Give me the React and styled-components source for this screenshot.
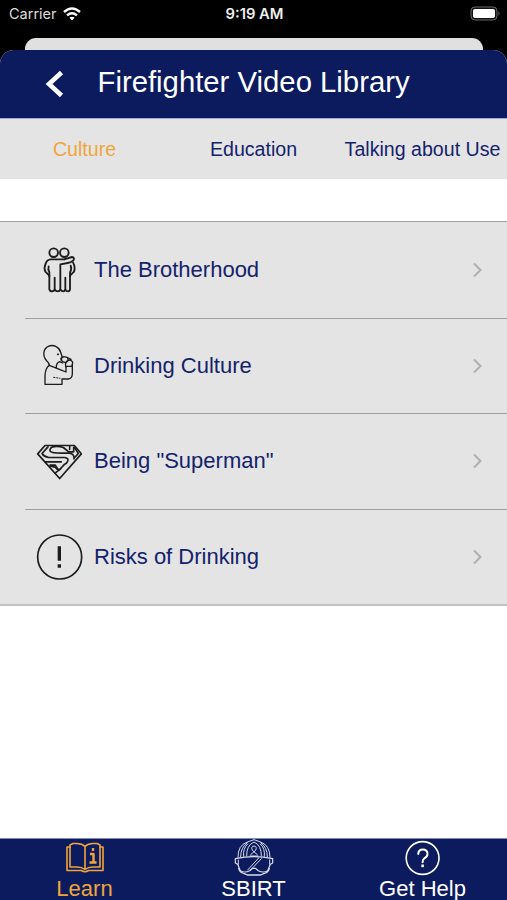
import styled, { createGlobalStyle } from 'styled-components'

const colors = {
  navy: '#0b1b5e',
  ink: '#14226c',
  orange: '#f0a53c',
  grey: '#e4e4e4',
  line: '#a0a0a0'
}

const GlobalStyle = createGlobalStyle`
  * {
    box-sizing: border-box;
  }
  body {
    margin: 0;
    background: #000;
    font-family: "Liberation Sans", Arial, sans-serif;
  }
`
const Screen = styled.div`
  width: 507px;
  height: 900px;
  display: flex;
  flex-direction: column;
  overflow: hidden;
`
const StatusBar = styled.header`
  height: 38px;
  flex: none;
  display: grid;
  grid-template-columns: 1fr auto 1fr;
  padding: 0 7px 11px 9px;
  align-items: center;
  color: #dcdcdc;
  font-family: Inter, sans-serif;
  font-size: 14.5px;
`
const Carrier = styled.div`
  display: flex;
  align-items: center;
  gap: 6px;
`
const Time = styled.div`
  font-weight: 600;
  font-size: 14.8px;
  color: #eee;
`
const Battery = styled.svg`
  justify-self: end;
`
const BackCard = styled.div`
  flex: none;
  height: 12px;
  margin: 0 24px 0 25px;
  background: #e0e0e0;
  border-radius: 11px 11px 0 0;
`
const Sheet = styled.main`
  flex: 1;
  display: flex;
  flex-direction: column;
  background: #fff;
  border-radius: 14px 14px 0 0;
  overflow: hidden;
`
const TitleBar = styled.div`
  flex: none;
  height: 69px;
  display: flex;
  align-items: center;
  padding: 0 0 4px 45px;
  background: ${colors.navy};
  border-bottom: 1px solid #a3abd0;
  color: #fff;
`
const Back = styled.svg`
  margin-top: 4px;
`
const Title = styled.h1`
  margin: 0 0 0 32.5px;
  font-size: 29.3px;
  font-weight: 400;
  line-height: 34px;
  white-space: nowrap;
`
const Tabs = styled.nav`
  flex: none;
  height: 60px;
  display: grid;
  grid-template-columns: repeat(3, 1fr);
  align-items: center;
  background: ${colors.grey};
`
const Tab = styled.span`
  text-align: center;
  font-size: 19.6px;
  white-space: nowrap;
  color: ${props => props.$active ? colors.orange : colors.ink};
`
const List = styled.ul`
  flex: none;
  margin: 42px 0 0;
  padding: 0;
  list-style: none;
  height: 385px;
  display: grid;
  grid-template-rows: repeat(4, 1fr);
  background: ${colors.grey};
  border-top: 1px solid ${colors.line};
  border-bottom: 2px solid #c2c2c2;
`
const Row = styled.li`
  display: flex;
  align-items: center;
  margin-left: 25px;
  padding: 0 24px 0 11px;
  color: ${colors.ink};
  border-top: ${props => props.$first ? '0' : `1px solid ${colors.line}`};
`
const Label = styled.span`
  flex: 1;
  margin-left: 10px;
  font-size: 22px;
`
const RowIcon = styled.svg`
  width: 48px;
  height: 50px;
  fill: none;
  stroke: #1c1c1c;
  stroke-width: ${props => props.$weight || 5};
  stroke-linejoin: round;
  stroke-linecap: round;
`
const TabBar = styled.footer`
  flex: none;
  height: 62px;
  margin-top: auto;
  display: grid;
  grid-template-columns: repeat(3, 1fr);
  background: ${colors.navy};
  border-top: 1px solid #8088ad;
`
const BarItem = styled.div`
  display: flex;
  flex-direction: column;
  align-items: center;
  color: ${props => props.$active ? colors.orange : '#fff'};
  font-size: 22px;
  line-height: 23px;
`
const BarIcon = styled.svg`
  width: 46px;
  height: 38px;
  fill: none;
  stroke: currentColor;
  stroke-width: 1.6;
  stroke-linejoin: round;
  stroke-linecap: round;
`

const Wifi = () => (
  <svg width="18" height="14" viewBox="0 0 18 14" fill="none" stroke="#fff" strokeWidth="2.4">
    <path d="M1 5Q9-2 17 5" />
    <path d="M4 8.3Q9 4 14 8.3" />
    <path d="M6.4 10.8Q9 8.6 11.6 10.8L9 13.4Z" fill="#fff" stroke="none" />
  </svg>
)

const Brothers = () => (
  <RowIcon viewBox="48 30 144 150" $weight={5.5}>
    <circle cx="101" cy="53" r="13" />
    <circle cx="133" cy="53" r="13" />
    <path d="M133 73H92Q80 74 77 86Q71 98 76 110L88 122V162Q89 169 96 169Q102 169 104 164Q108 169 113 169Q119 169 121 164Q125 169 130 169Q134 169 136 164Q139 169 144 169Q150 168 150 161V122L162 110Q167 97 159 82" />
    <path d="M133 73L156 66Q164 67 161 75Q155 82 143 84L121 88V164" />
    <path d="M86 94Q83 105 88 112V124M152 92Q156 102 150 113V124M104 128V164M136 128V164" />
  </RowIcon>
)

const Drinker = () => (
  <RowIcon viewBox="48 18 144 150" $weight={4}>
    <path d="M88 91Q87 83 80 77C68 65 68 42 85 34C101 27 119 37 122 52L126 64L123 75" />
    <path d="M88 91Q77 97 75 120V148H126V132H145Q157 130 157 116V88" />
    <path d="M113 58H115" strokeWidth="5" />
    <path d="M88 91L120 104L138 111V94M109 98Q108 84 119 80L128 84" />
    <path d="M123 70L131 65L142 67L145 76L137 83L127 80Z" />
    <path d="M138 96Q133 83 144 76Q155 73 158 82L156 94H139M145 69L153 73" />
    <path d="M101 127L120 130" strokeDasharray="4 5" strokeWidth="3" />
  </RowIcon>
)

const Shield = () => (
  <RowIcon viewBox="48 19.5 144 150" $weight={5}>
    <path d="M75 48H163L184 73L119 147L53 73Z" />
    <path d="M84 52L66 72Q72 82 86 84H134Q147 86 143 95Q141 101 134 104L119 120Q110 121 105 113L92 110" />
    <path d="M98 52Q87 58 91 66Q96 71 124 71H148Q164 73 162 88" />
    <path d="M98 52Q113 49 130 54L146 67H161V54M149 51V60M163 53L175 72L164 84" />
    <path d="M76 97H124M90 107H106L113 118M106 130L122 118" />
  </RowIcon>
)

const Warning = () => (
  <RowIcon viewBox="48 36 144 150">
    <circle cx="119" cy="111" r="66" />
    <path d="M118 79V122M118 133V143" strokeWidth="10" strokeLinecap="butt" />
  </RowIcon>
)

const rows = [
  { label: 'The Brotherhood', icon: Brothers },
  { label: 'Drinking Culture', icon: Drinker },
  { label: 'Being "Superman"', icon: Shield },
  { label: 'Risks of Drinking', icon: Warning }
]

const Book = () => (
  <BarIcon viewBox="0 0 46 38">
    <path d="M23 7.500Q20 4.500 15 4.500H11L8 6V28H15Q20 28 23 30.500Q26 28 31 28H38V6L35 4.500H31Q26 4.500 23 7.500V30.500" />
    <path d="M8 8H5V31.500H19.500Q23 34 26.500 31.500H41V8H38" />
    <path d="M31 9V12M28 15H31.500V23M27.500 23.500H34.500" strokeWidth="2.4" strokeLinecap="butt" />
  </BarIcon>
)

const Helmet = () => (
  <BarIcon viewBox="63 27 138 114">
    <g strokeWidth="3" opacity=".85">
      <path d="M84 82Q83 46 112 36L132 29L152 36Q180 46 180 82" />
      <path d="M92 80Q92 52 112 38M101 79Q98 55 113 42M172 80Q172 52 152 38M163 79Q166 55 151 42" />
      <path d="M110 78Q109 46 132 36Q155 46 154 78" />
      <path d="M122 74L137 61Q142 49 132 48Q122 49 127 61L142 74M120 78H144" />
      <path d="M76 86Q132 74 188 86V99L181 103L173 122Q160 130 145 122L136 115H128L119 122Q104 130 91 122L83 103L76 99Z" strokeWidth="3.6" />
      <path d="M85 90V103M179 90V103M113 120L146 84M120 122L154 86" />
      <path d="M86 116Q90 129 103 131L112 135H152L161 131Q174 129 178 116" strokeWidth="4" />
    </g>
  </BarIcon>
)

const Help = () => (
  <BarIcon viewBox="0 0 46 38">
    <circle cx="22.600" cy="19" r="16.400" />
    <path d="M18.300 15Q18.300 10.500 22.800 10.500Q27.500 10.500 27.500 15Q27.500 17.500 24.600 19.200Q22.600 20.400 22.600 23.300" strokeWidth="2" />
    <path d="M22.600 25.500V28.200" strokeWidth="2.600" strokeLinecap="butt" />
  </BarIcon>
)

const App = () => (
  <Screen>
    <GlobalStyle />
    <StatusBar>
      <Carrier>Carrier <Wifi /></Carrier>
      <Time>9:19 AM</Time>
      <Battery width="30" height="15" viewBox="0 0 30 15">
        <rect x="1" y="1" width="26" height="13" rx="4" fill="#111" stroke="#666" />
        <rect x="3" y="3" width="22" height="9" rx="2" fill="#fff" />
        <path d="M28.500 5V10Q30.500 7.500 28.500 5" fill="#666" />
      </Battery>
    </StatusBar>
    <BackCard />
    <Sheet>
      <TitleBar>
        <Back width="20" height="28" viewBox="0 0 20 28" fill="none" stroke="#fff" strokeWidth="4.600">
          <path d="M16.500 2.500L4 14L16.500 25.500" />
        </Back>
        <Title>Firefighter Video Library</Title>
      </TitleBar>
      <Tabs>
        <Tab $active>Culture</Tab>
        <Tab>Education</Tab>
        <Tab>Talking about Use</Tab>
      </Tabs>
      <List>
        {rows.map(({ label, icon: Icon }, i) => (
          <Row key={label} $first={i === 0}>
            <Icon />
            <Label>{label}</Label>
            <svg width="11" height="16" viewBox="0 0 11 16" fill="none" stroke="#b0b0b0" strokeWidth="2">
              <path d="M2 1.500L8.500 8L2 14.500" />
            </svg>
          </Row>
        ))}
      </List>
      <TabBar>
        <BarItem $active><Book />Learn</BarItem>
        <BarItem><Helmet />SBIRT</BarItem>
        <BarItem><Help />Get Help</BarItem>
      </TabBar>
    </Sheet>
  </Screen>
)

export default App
